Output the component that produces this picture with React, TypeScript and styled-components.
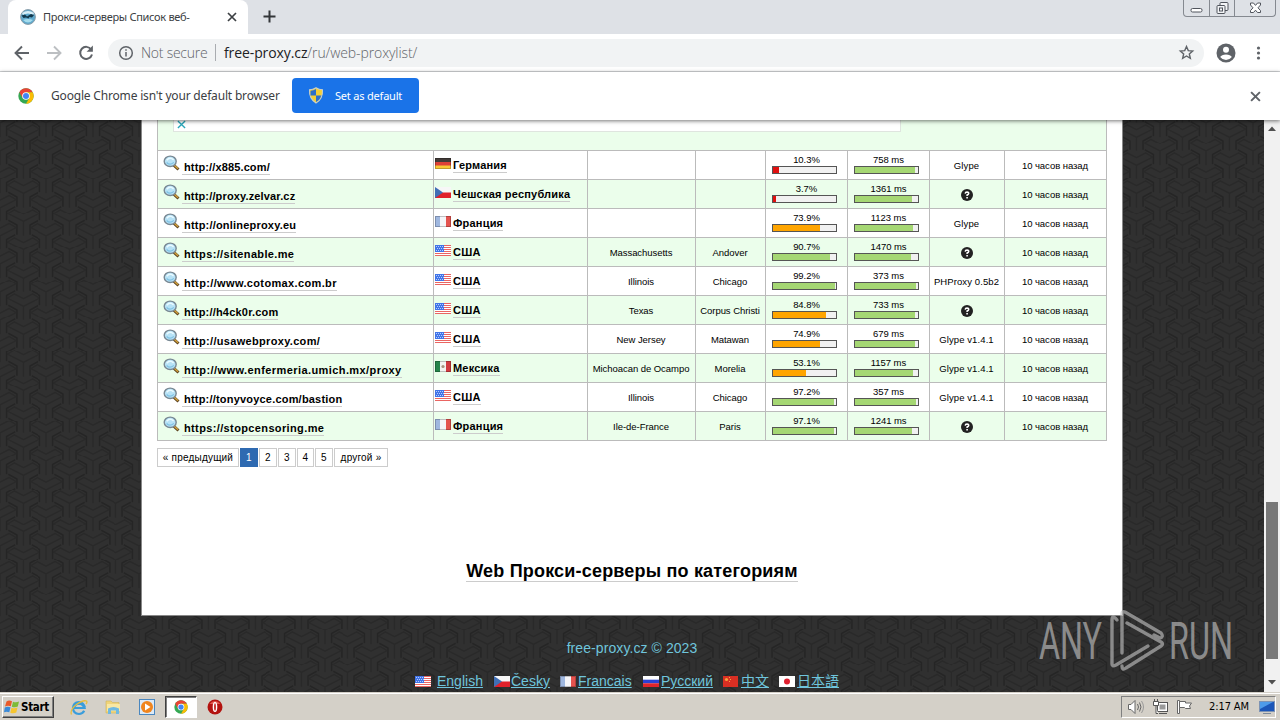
import React from "react";
import styled, { createGlobalStyle } from "styled-components";

const GlobalStyle = createGlobalStyle`
  * {
    box-sizing: border-box;
  }
  body {
    margin: 0;
    overflow: hidden;
    font-family: "Liberation Sans", "Noto Sans CJK SC", sans-serif;
  }
  svg {
    display: block;
    flex: none;
  }
`;

const knot = (x: number, y: number) =>
  `<g transform="translate(${x} ${y})"><path d="M-16 -4L-9 -8L0 -3.5L9 -8L16 -4M-16 -4L0 4L16 -4M0 4V18"/><path d="M-6.5 17V7.5L-15 3M6.5 17V7.5L15 3" stroke="#252525" stroke-width="1.6"/></g>`;

const pattern = encodeURIComponent(
  `<svg xmlns="http://www.w3.org/2000/svg" width="46.4" height="28.2" viewBox="0 0 46.4 28.2"><rect width="47" height="29" fill="#303030"/><g fill="none" stroke="#292929" stroke-width="1.5">${[
    [23.2, -21.2],
    [23.2, 7],
    [23.2, 35.2],
    [0, -7.1],
    [0, 21.1],
    [46.4, -7.1],
    [46.4, 21.1],
  ]
    .map(([x, y]) => knot(x, y))
    .join("")}</g></svg>`
);

const Screen = styled.div`
  position: relative;
  width: 1280px;
  height: 720px;
  display: flex;
  flex-direction: column;
  overflow: hidden;
  background: #fff;
`;

const TabStrip = styled.div`
  height: 34px;
  flex: none;
  display: flex;
  align-items: flex-start;
  padding-left: 8px;
  background: #dee1e6;
`;

const Tab = styled.div`
  width: 240px;
  height: 34px;
  display: flex;
  align-items: center;
  padding: 0 11px 0 12px;
  background: #fff;
  border-radius: 8px 8px 0 0;
`;

const TabTitle = styled.div`
  flex: 1;
  margin-left: 7px;
  font: 11px/16px "Noto Sans", sans-serif;
  letter-spacing: -0.3px;
  color: #3c4043;
  white-space: nowrap;
`;

const NewTab = styled.div`
  margin: 10px 0 0 15px;
  flex: 1;
`;

const WindowButtons = styled.div`
  width: 93px;
  height: 17px;
  margin-right: 4px;
  display: grid;
  grid-template-columns: 25px 25px 1fr;
  border: 1px solid #858990;
  border-top: 0;
  border-radius: 0 0 4px 4px;
`;

const WindowButton = styled.div`
  display: flex;
  align-items: center;
  justify-content: center;
  & + & {
    border-left: 1px solid #858990;
  }
`;

const Toolbar = styled.div`
  height: 38px;
  flex: none;
  display: flex;
  align-items: center;
  padding: 0 12px 0 13px;
  border-bottom: 1px solid #d5d7da;
  color: #5f6368;
`;

const NavButtons = styled.div`
  display: flex;
  gap: 14px;
  width: 95px;
`;

const AddressBar = styled.div`
  width: 1096px;
  height: 28px;
  display: flex;
  align-items: center;
  padding: 0 9px;
  border-radius: 14px;
  background: #f1f3f4;
  font: 300 14px/20px "Open Sans", "Noto Sans", sans-serif;
  color: #5f6368;
`;

const NotSecure = styled.span`
  width: 75px;
  margin-left: 7px;
  border-right: 1px solid #a9acb0;
  line-height: 17px;
  letter-spacing: -0.25px;
  white-space: nowrap;
`;

const Url = styled.span`
  flex: 1;
  margin-left: 8px;
  letter-spacing: -0.1px;
  b {
    font-weight: 400;
    color: #202124;
  }
`;

const ToolbarEnd = styled.div`
  display: flex;
  align-items: center;
  gap: 12px;
  margin-left: 12px;
`;

const InfoBar = styled.div`
  position: relative;
  z-index: 1;
  height: 48px;
  flex: none;
  display: flex;
  align-items: center;
  padding: 0 19px 0 18px;
  background: #fff;
  box-shadow: 0 1px 4px rgba(0, 0, 0, 0.55);
`;

const InfoText = styled.span`
  width: 258px;
  padding-left: 17px;
  font: 12px/18px "Noto Sans", sans-serif;
  letter-spacing: -0.18px;
  color: #3c4043;
  white-space: nowrap;
`;

const DefaultButton = styled.div`
  width: 127px;
  height: 35px;
  margin: 0 auto 1px 0;
  display: flex;
  align-items: center;
  gap: 11px;
  padding-left: 16px;
  border-radius: 4px;
  background: #1a73e8;
  color: #fff;
  font: 11px/16px "Noto Sans", sans-serif;
  letter-spacing: -0.2px;
`;

const Viewport = styled.div`
  flex: 1;
  min-height: 0;
  display: flex;
`;

const Page = styled.div`
  flex: 1;
  display: flex;
  flex-direction: column;
  align-items: center;
  background: #2e2e2e url("data:image/svg+xml,${pattern}") 0 6px;
`;

const Sheet = styled.div`
  width: 982px;
  height: 496px;
  padding: 0 15px;
  background: #fff;
  border: 1px solid #888;
  border-top: 0;
`;

const Table = styled.div`
  border: 1px solid #bbb;
  border-top: 0;
`;

const AdRow = styled.div`
  height: 30px;
  padding-left: 15px;
  background: #ebfeeb;
`;

const AdSlot = styled.div`
  width: 728px;
  height: 12px;
  padding: 0 3px;
  background: #fff;
  border: 1px solid #dfe5df;
  border-top: 0;
`;

const Row = styled.div<{ $even: boolean }>`
  height: 29px;
  display: grid;
  grid-template-columns: 275px 154px 108px 70px 82px 82px 75px 1fr;
  border-top: 1px solid #bbb;
  background: ${(p) => (p.$even ? "#ebfeeb" : "#fff")};
`;

const Cell = styled.div<{ $spacing?: number }>`
  display: flex;
  align-items: center;
  justify-content: center;
  padding: 1px 1px 0 0;
  font-size: 9.5px;
  letter-spacing: ${(p) => p.$spacing ?? -0.05}px;
  color: #000;
  white-space: nowrap;
  & + & {
    border-left: 1px solid #bbb;
  }
`;

const LinkCell = styled(Cell)`
  justify-content: flex-start;
  align-items: flex-start;
  padding: 4px 0 0 5px;
`;

const CountryCell = styled(LinkCell)`
  padding: 7px 0 0 1px;
  && {
    border-left: 1px solid #bbb;
  }
`;

const SiteLink = styled.span<{ $spacing?: number }>`
  margin: 5px 0 0 2px;
  padding-left: 2px;
  border-bottom: 1px solid #ccc;
  font-size: 11px;
  font-weight: bold;
  line-height: 14px;
  letter-spacing: ${(p) => p.$spacing ?? 0.2}px;
`;

const CountryLink = styled(SiteLink)`
  margin: 0 0 0 2px;
  padding: 0;
`;

const MeterCell = styled(Cell)`
  flex-direction: column;
  justify-content: flex-start;
  padding: 3px 0 0;
  line-height: 12px;
`;

const Meter = styled.div`
  width: 65px;
  height: 8px;
  margin-right: 4px;
  border: 1px solid #555;
  background: #f1f1f1;
`;

const MeterFill = styled.div<{ $color: string }>`
  height: 100%;
  background: ${(p) => p.$color};
`;

const Pager = styled.div`
  display: flex;
  gap: 1px;
  margin-top: 7px;
`;

const PageLink = styled.span<{ $width: number; $active?: boolean }>`
  width: ${(p) => p.$width}px;
  height: 19px;
  border: 1px solid ${(p) => (p.$active ? "#2e6ab1" : "#ccc")};
  background: ${(p) => (p.$active ? "#2e6ab1" : "#fff")};
  color: ${(p) => (p.$active ? "#fff" : "#000")};
  font-size: 10px;
  line-height: 18px;
  letter-spacing: 0.2px;
  text-align: center;
  white-space: nowrap;
`;

const Heading = styled.h2`
  width: max-content;
  margin: 92px auto 0;
  padding-top: 2px;
  border-bottom: 1px solid #ccc;
  font-size: 18px;
  line-height: 20px;
  letter-spacing: 0.19px;
  color: #000;
`;

const Copyright = styled.div`
  margin-top: 23px;
  font-size: 14px;
  line-height: 18px;
  letter-spacing: 0.08px;
  color: #6fc5dc;
`;

const Languages = styled.div`
  width: 434px;
  display: flex;
  align-items: center;
  margin-top: 14px;
`;

const Language = styled.div<{ $width: number; $gap?: number }>`
  width: ${(p) => p.$width}px;
  display: flex;
  align-items: center;
  gap: ${(p) => p.$gap ?? 1}px;
  font-size: 14px;
  line-height: 20px;
  color: #6fc5dc;
  text-decoration: underline;
  white-space: nowrap;
`;

const Scrollbar = styled.div`
  width: 16px;
  display: flex;
  flex-direction: column;
  align-items: center;
  justify-content: space-between;
  padding: 6px 0 7px;
  background: #f1f1f1;
`;

const Thumb = styled.div`
  width: 12px;
  height: 157px;
  margin: 371px 0 auto;
  background: #787878;
`;

const Taskbar = styled.div`
  height: 28px;
  flex: none;
  display: flex;
  align-items: flex-start;
  padding: 2px 4px 0 2px;
  border-top: 1px solid #d4d0c8;
  box-shadow: inset 0 1px #fff;
  background: #d4d0c8;
`;

const StartButton = styled.div`
  width: 52px;
  height: 22px;
  margin-top: 1px;
  display: flex;
  align-items: center;
  gap: 1px;
  padding-left: 1px;
  border: 1px solid;
  border-color: #fff #404040 #404040 #fff;
  box-shadow: inset -1px -1px #808080;
  font: bold 11.5px/16px "DejaVu Sans Condensed", "DejaVu Sans", sans-serif;
  letter-spacing: -0.3px;
  color: #000;
`;

const TaskIcons = styled.div`
  display: flex;
  align-items: center;
  height: 24px;
  margin-left: 8px;
  flex: 1;
`;

const TaskButton = styled.div<{ $active?: boolean }>`
  width: 34px;
  height: 22px;
  display: flex;
  align-items: center;
  justify-content: center;
  ${(p) =>
    p.$active &&
    `
    width: 32px;
    margin: 0 1px;
    border: 1px solid;
    border-color: #404040 #fff #fff #404040;
    box-shadow: inset 1px 1px #808080;
    background: #fff;
  `}
`;

const Tray = styled.div`
  width: 155px;
  height: 22px;
  margin-top: 1px;
  display: flex;
  align-items: center;
  gap: 7px;
  padding-left: 5px;
  border: 1px solid;
  border-color: #808080 #fff #fff #808080;
`;

const Clock = styled.span`
  width: 43px;
  margin: 0 2px 0 9px;
  font: 11px/16px "DejaVu Sans Condensed", "DejaVu Sans", sans-serif;
  letter-spacing: -0.1px;
  white-space: nowrap;
`;

const Watermark = styled.svg`
  position: absolute;
  left: 1030px;
  top: 605px;
  z-index: 2;
  opacity: 0.62;
`;

type FlagCode = "de" | "cz" | "fr" | "us" | "mx" | "ru" | "cn" | "jp";

const Flag = ({ code }: { code: FlagCode }) => (
  <svg width="16" height="11" viewBox="0 0 16 11">
    {code === "de" && (
      <>
        <rect width="16" height="11" fill="#f9c835" />
        <rect width="16" height="7.5" fill="#dd4037" />
        <rect width="16" height="4" fill="#423b38" />
      </>
    )}
    {code === "cz" && (
      <>
        <rect width="16" height="11" fill="#f7f7f7" />
        <rect y="5.5" width="16" height="5.5" fill="#e0212b" />
        <path d="M0 0L8 5.5L0 11Z" fill="#416fb5" />
      </>
    )}
    {code === "fr" && (
      <>
        <rect width="16" height="11" fill="#f5f5f8" />
        <rect width="5" height="11" fill="#9fb7df" />
        <rect x="11" width="5" height="11" fill="#e4534f" />
      </>
    )}
    {code === "us" && (
      <>
        <rect width="16" height="11" fill="#fff" />
        <path
          d="M0 .5H16M0 2.5H16M0 4.5H16M0 6.5H16M0 8.5H16M0 10.5H16"
          stroke="#ea6562"
        />
        <rect width="9" height="7" fill="#4174e8" />
        <path
          d="M1 1.5H9M2 3.5H9M1 5.5H9"
          stroke="#b4ccff"
          strokeDasharray="1 1"
        />
      </>
    )}
    {code === "mx" && (
      <>
        <rect width="16" height="11" fill="#f3f3f0" />
        <rect width="5" height="11" fill="#26834b" />
        <rect x="11" width="5" height="11" fill="#d13a40" />
        <circle cx="8" cy="5.5" r="1.6" fill="#a7917c" />
      </>
    )}
    {code === "ru" && (
      <>
        <rect width="16" height="11" fill="#fff" />
        <rect y="3.7" width="16" height="3.7" fill="#2a41d4" />
        <rect y="7.3" width="16" height="3.7" fill="#e0252c" />
      </>
    )}
    {code === "cn" && (
      <>
        <rect width="15" height="11" fill="#d92f23" />
        <circle cx="3.5" cy="3.5" r="1.6" fill="#f6a23c" />
        <path d="M6 1.5h1M7 3.5h1M6 5.5h1" stroke="#f6a23c" />
      </>
    )}
    {code === "jp" && (
      <>
        <rect width="16" height="11" fill="#fff" />
        <circle cx="8" cy="5.5" r="3" fill="#e02030" />
      </>
    )}
    {(code === "de" || code === "fr" || code === "mx") && (
      <rect
        x=".5"
        y=".5"
        width="15"
        height="10"
        fill="none"
        stroke="#000"
        opacity=".22"
      />
    )}
  </svg>
);

const Magnifier = () => (
  <svg width="17" height="17" viewBox="0 0 17 17">
    <path d="M10.5 10L15.5 14.5" stroke="#5b4321" strokeWidth="3" />
    <path d="M11 10L15 13.7" stroke="#d3a13c" strokeWidth="1.5" />
    <ellipse cx="7.2" cy="6.3" rx="6" ry="5.2" fill="#b7e2f6" stroke="#788792" strokeWidth="1.4" />
    <path d="M3.7 5.2Q7 1.5 10.6 5" fill="none" stroke="#eafaff" strokeWidth="1.5" />
    <path d="M3.6 7.5Q7 11 10.8 7.4" fill="none" stroke="#7fc2e4" strokeWidth="1.2" />
  </svg>
);

const Cross = ({ size, color, width = 2 }: { size: number; color: string; width?: number }) => (
  <svg width={size} height={size} viewBox="0 0 10 10">
    <path d="M1 1L9 9M9 1L1 9" stroke={color} strokeWidth={width} />
  </svg>
);

const ChromeLogo = ({ size }: { size: number }) => (
  <svg width={size} height={size} viewBox="0 0 48 48">
    <circle cx="24" cy="24" r="23" fill="#34a853" />
    <path d="M4.1 12.5A23 23 0 0 1 43.9 12.5H24L14 29.8Z" fill="#ea4335" />
    <path d="M43.9 12.5A23 23 0 0 1 24 47L34 29.8L24 12.5Z" fill="#fbbc05" />
    <circle cx="24" cy="24" r="11.5" fill="#fff" />
    <circle cx="24" cy="24" r="9" fill="#4285f4" />
  </svg>
);

const Globe = () => (
  <svg width="16" height="16" viewBox="0 0 16 16">
    <circle cx="8" cy="8" r="7.4" fill="#5fa9cd" stroke="#8b9da8" strokeWidth="1" />
    <path d="M2 4Q8 0 14 4L13 6Q8 3 3 6Z" fill="#d7eef7" />
    <path d="M1.5 6.5L5 5.5L7 7.5L11 5L14 6L12 8.5L9.5 8L8.5 9.5L6 8.5L3.5 9Z" fill="#12384c" />
    <path d="M3 11Q8 9 13 11Q8 16 3 11Z" fill="#a5dced" />
  </svg>
);

const Shield = () => (
  <svg width="16" height="17" viewBox="0 0 16 17">
    <path d="M8 .8Q11 2.8 14.5 2.8Q15 12 8 16Q1 12 1.5 2.8Q5 2.8 8 .8Z" fill="#f5cf35" stroke="#c9d0c8" strokeWidth="1.1" />
    <path d="M8 2Q5.5 3.6 2.5 3.8V8.5H8Z" fill="#2d6fca" />
    <path d="M8 8.5H13.3Q12 13 8 15Z" fill="#2d6fca" />
  </svg>
);

const QuestionMark = () => (
  <svg width="12" height="12" viewBox="0 0 12 12">
    <circle cx="6" cy="6" r="6" fill="#222" />
    <path d="M4.2 4.6Q4.3 3 6 3Q7.8 3.1 7.7 4.5Q7.5 5.4 6.1 6V7" fill="none" stroke="#fff" strokeWidth="1.5" />
    <path d="M5.3 8H6.9V9.5H5.3Z" fill="#fff" />
  </svg>
);

type Proxy = {
  url: string;
  spacing?: number;
  flag: FlagCode;
  country: string;
  region?: string;
  city?: string;
  uptime: number;
  ms: number;
  speed: number;
  software?: string;
};

const proxies: Proxy[] = [
  { url: "http://x885.com/", spacing: 0.13, flag: "de", country: "Германия", uptime: 10.3, ms: 758, speed: 95, software: "Glype" },
  { url: "http://proxy.zelvar.cz", spacing: 0.15, flag: "cz", country: "Чешская республика", uptime: 3.7, ms: 1361, speed: 90 },
  { url: "http://onlineproxy.eu", flag: "fr", country: "Франция", uptime: 73.9, ms: 1123, speed: 92, software: "Glype" },
  { url: "https://sitenable.me", spacing: 0.35, flag: "us", country: "США", region: "Massachusetts", city: "Andover", uptime: 90.7, ms: 1470, speed: 89 },
  { url: "http://www.cotomax.com.br", spacing: 0.36, flag: "us", country: "США", region: "Illinois", city: "Chicago", uptime: 99.2, ms: 373, speed: 97, software: "PHProxy 0.5b2" },
  { url: "http://h4ck0r.com", flag: "us", country: "США", region: "Texas", city: "Corpus Christi", uptime: 84.8, ms: 733, speed: 95 },
  { url: "http://usawebproxy.com/", spacing: 0.32, flag: "us", country: "США", region: "New Jersey", city: "Matawan", uptime: 74.9, ms: 679, speed: 95, software: "Glype v1.4.1" },
  { url: "http://www.enfermeria.umich.mx/proxy", spacing: 0.42, flag: "mx", country: "Мексика", region: "Michoacan de Ocampo", city: "Morelia", uptime: 53.1, ms: 1157, speed: 92, software: "Glype v1.4.1" },
  { url: "http://tonyvoyce.com/bastion", flag: "us", country: "США", region: "Illinois", city: "Chicago", uptime: 97.2, ms: 357, speed: 97, software: "Glype v1.4.1" },
  { url: "https://stopcensoring.me", spacing: 0.37, flag: "fr", country: "Франция", region: "Ile-de-France", city: "Paris", uptime: 97.1, ms: 1241, speed: 91 },
];

const meterColor = (value: number) =>
  value < 33 ? "#e0100f" : value < 90 ? "#ffa500" : "#a5d773";

const ProxyRow = ({ proxy, even }: { proxy: Proxy; even: boolean }) => (
  <Row $even={even}>
    <LinkCell>
      <Magnifier />
      <SiteLink $spacing={proxy.spacing}>{proxy.url}</SiteLink>
    </LinkCell>
    <CountryCell>
      <Flag code={proxy.flag} />
      <CountryLink>{proxy.country}</CountryLink>
    </CountryCell>
    <Cell>{proxy.region}</Cell>
    <Cell>{proxy.city}</Cell>
    <MeterCell>
      {proxy.uptime}%
      <Meter>
        <MeterFill
          $color={meterColor(proxy.uptime)}
          style={{ width: `${Math.max(proxy.uptime, 5)}%` }}
        />
      </Meter>
    </MeterCell>
    <MeterCell>
      {proxy.ms} ms
      <Meter>
        <MeterFill $color="#a5d773" style={{ width: `${proxy.speed}%` }} />
      </Meter>
    </MeterCell>
    <Cell $spacing={0.1}>{proxy.software || <QuestionMark />}</Cell>
    <Cell $spacing={-0.05}>10 часов назад</Cell>
  </Row>
);

const BrowserChrome = () => (
  <>
    <TabStrip>
      <Tab>
        <Globe />
        <TabTitle>Прокси-серверы Список веб-</TabTitle>
        <Cross size={10} color="#3c4043" width={1.7} />
      </Tab>
      <NewTab>
        <svg width="13" height="13" viewBox="0 0 13 13">
          <path d="M6.5 .5V12.5M.5 6.5H12.5" stroke="#333639" strokeWidth="2" />
        </svg>
      </NewTab>
      <WindowButtons>
        <WindowButton>
          <svg width="13" height="16" viewBox="0 0 13 16">
            <rect x="1" y="8.5" width="11" height="3.5" rx="1.5" fill="#fff" stroke="#50545c" />
          </svg>
        </WindowButton>
        <WindowButton>
          <svg width="13" height="14" viewBox="0 0 13 14" fill="#f3f4f6" stroke="#50545c">
            <rect x="4" y="1.5" width="8" height="8" rx="1" />
            <rect x="1" y="4.5" width="8" height="8" rx="1" />
            <rect x="3.5" y="7" width="3" height="3" />
          </svg>
        </WindowButton>
        <WindowButton>
          <svg width="13" height="12" viewBox="0 0 13 12">
            <path d="M1.5 1H4.5L6.5 3.4L8.5 1H11.5V3L9 5.8L11.5 8.6V10.5H8.5L6.5 8.2L4.5 10.5H1.5V8.6L4 5.8L1.5 3Z" fill="#fff" stroke="#50545c" />
          </svg>
        </WindowButton>
      </WindowButtons>
    </TabStrip>
    <Toolbar>
      <NavButtons>
        <svg width="18" height="18" viewBox="0 0 18 18" fill="none" stroke="#5f6368" strokeWidth="1.9">
          <path d="M16 9H3M9 2.5L2.5 9L9 15.5" />
        </svg>
        <svg width="18" height="18" viewBox="0 0 18 18" fill="none" stroke="#bcbfc2" strokeWidth="1.9">
          <path d="M2 9H15M9 2.5L15.5 9L9 15.5" />
        </svg>
        <svg width="18" height="18" viewBox="0 0 18 18" fill="none" stroke="#5f6368" strokeWidth="2">
          <path d="M14.2 5.5A6 6 0 1 0 15 10.5" />
          <path d="M15.9 1.5V7.8H9.6Z" fill="#5f6368" stroke="none" />
        </svg>
      </NavButtons>
      <AddressBar>
        <svg width="17" height="16" viewBox="0 0 17 16" fill="none" stroke="#5f6368" strokeWidth="1.5">
          <circle cx="9" cy="8" r="6.3" />
          <path d="M9 7V11.5M9 4.3V5.8" />
        </svg>
        <NotSecure>Not secure</NotSecure>
        <Url>
          <b>free-proxy.cz</b>/ru/web-proxylist/
        </Url>
        <svg width="17" height="17" viewBox="0 0 24 24" fill="none" stroke="#5f6368" strokeWidth="2">
          <path d="M12 3.5L14.5 9.3L20.7 9.9L16 14L17.4 20.2L12 16.9L6.6 20.2L8 14L3.3 9.9L9.5 9.3Z" />
        </svg>
      </AddressBar>
      <ToolbarEnd>
        <svg width="20" height="20" viewBox="0 0 20 20">
          <circle cx="10" cy="10" r="9.5" fill="#5f6368" />
          <circle cx="10" cy="6.7" r="3" fill="#fff" />
          <path d="M4.2 14Q5.5 11.7 10 11.6Q14.5 11.7 15.8 14Q13.6 17 10 17Q6.4 17 4.2 14Z" fill="#fff" />
        </svg>
        <svg width="20" height="16" viewBox="0 0 20 16" fill="#5f6368">
          <circle cx="10.5" cy="3" r="1.6" />
          <circle cx="10.5" cy="8" r="1.6" />
          <circle cx="10.5" cy="13" r="1.6" />
        </svg>
      </ToolbarEnd>
    </Toolbar>
    <InfoBar>
      <ChromeLogo size={16} />
      <InfoText>Google Chrome isn't your default browser</InfoText>
      <DefaultButton>
        <Shield />
        Set as default
      </DefaultButton>
      <Cross size={11} color="#5f6368" width={1.8} />
    </InfoBar>
  </>
);

const ProxyPage = () => (
  <Page>
    <Sheet>
      <Table>
        <AdRow>
          <AdSlot>
            <Cross size={9} color="#28a5b8" width={1.5} />
          </AdSlot>
        </AdRow>
        {proxies.map((proxy, i) => (
          <ProxyRow key={proxy.url} proxy={proxy} even={i % 2 === 1} />
        ))}
      </Table>
      <Pager>
        <PageLink $width={82}>« предыдущий</PageLink>
        <PageLink $width={18} $active>
          1
        </PageLink>
        {[2, 3, 4, 5].map((n) => (
          <PageLink key={n} $width={n === 4 ? 17 : 18}>
            {n}
          </PageLink>
        ))}
        <PageLink $width={54}>другой »</PageLink>
      </Pager>
      <Heading>Web Прокси-серверы по категориям</Heading>
    </Sheet>
    <Copyright>free-proxy.cz © 2023</Copyright>
    <Languages>
      <Language $width={79} $gap={6}>
        <Flag code="us" />
        English
      </Language>
      <Language $width={66}>
        <Flag code="cz" />
        Česky
      </Language>
      <Language $width={83} $gap={2}>
        <Flag code="fr" />
        Francais
      </Language>
      <Language $width={80} $gap={2}>
        <Flag code="ru" />
        Русский
      </Language>
      <Language $width={56} $gap={2}>
        <Flag code="cn" />
        中文
      </Language>
      <Language $width={62} $gap={2}>
        <Flag code="jp" />
        日本語
      </Language>
    </Languages>
  </Page>
);

const WindowsTaskbar = () => (
  <Taskbar>
    <StartButton>
      <svg width="16" height="16" viewBox="0 0 16 16">
        <path d="M2.5 2.5Q5 .8 8 2.3L6.8 7.3Q4 6 1 7.5Z" fill="#ea5a2a" />
        <path d="M9 2.7Q12 4 15 2.5L13.8 7.5Q11 9 7.8 7.7Z" fill="#7dbb36" />
        <path d="M.8 8.5Q3.5 7 6.5 8.3L5.3 13.3Q2.5 12 0 13.3Z" fill="#3a8ad8" />
        <path d="M7.5 8.7Q10.5 10 13.5 8.5L12.3 13.5Q9.5 15 6.3 13.7Z" fill="#f6c52f" />
      </svg>
      Start
    </StartButton>
    <TaskIcons>
      <TaskButton>
        <svg width="18" height="17" viewBox="0 0 18 17" fill="none">
          <path d="M14.5 9H4.5Q4.6 5 9 4.6Q13 4.8 14.5 9ZM14.2 11.8Q12.5 15 9 15Q3.2 14.7 3 9Q3.2 3.4 9 3Q13.5 3.2 15 8.5" stroke="#3a9ddb" strokeWidth="2.2" />
          <path d="M1.5 15.5Q-.5 11 6.5 5.5Q13 .8 16.5 2Q17.6 3 16 5" stroke="#e8bd3c" strokeWidth="1.3" />
        </svg>
      </TaskButton>
      <TaskButton>
        <svg width="16" height="16" viewBox="0 0 16 16">
          <path d="M1 2H6L7.5 3.5H14V14H1Z" fill="#f0d47a" stroke="#cfb25a" strokeWidth=".6" />
          <path d="M2 5H15V12H2Z" fill="#f8e7a4" />
          <path d="M3 15V9.5Q8.5 6.5 14 9.5V15H11V11.5H6V15Z" fill="#6fb9e2" />
        </svg>
      </TaskButton>
      <TaskButton>
        <svg width="16" height="16" viewBox="0 0 16 16">
          <rect x=".5" y=".5" width="15" height="15" fill="#dceaf7" stroke="#4a87bf" />
          <circle cx="8" cy="8" r="6" fill="#f0851e" />
          <path d="M6 4.5L11.5 8L6 11.5Z" fill="#fff" />
        </svg>
      </TaskButton>
      <TaskButton $active>
        <ChromeLogo size={14} />
      </TaskButton>
      <TaskButton>
        <svg width="16" height="16" viewBox="0 0 16 16">
          <circle cx="8" cy="8" r="7.5" fill="#b3120f" />
          <path d="M2.5 5Q8 -1 13.5 5Z" fill="#e45a50" />
          <ellipse cx="8" cy="8" rx="2.3" ry="5" fill="#fff" />
          <ellipse cx="8" cy="8" rx=".9" ry="3.8" fill="#c4211c" />
        </svg>
      </TaskButton>
    </TaskIcons>
    <Tray>
      <svg width="18" height="16" viewBox="0 0 18 16" stroke="#666" fill="#fff">
        <path d="M1.5 5.5H4L8 1.5V14.5L4 10.5H1.5Z" />
        <path d="M10.5 5Q12.5 8 10.5 11M12.5 3.5Q15.5 8 12.5 12.5" fill="none" />
        <path d="M14.5 2Q18.5 8 14.5 14" fill="none" stroke="#999" />
      </svg>
      <svg width="17" height="16" viewBox="0 0 17 16" stroke="#555" fill="#fff">
        <rect x="5.5" y="3.5" width="10" height="9" />
        <rect x="7.5" y="5.5" width="6" height="5" fill="#999" stroke="none" />
        <path d="M7 14.5H15" />
        <path d="M1.5 2.5H6.5V6.5H1.5ZM4 7V14.5H6M2.5 2V0M5.5 2V0" />
      </svg>
      <svg width="17" height="16" viewBox="0 0 17 16" stroke="#666" fill="#fff">
        <path d="M1.5 1.5H3.5V14.5H1.5Z" />
        <path d="M3.5 2.5H9.5V4H15.5L13.5 7L14.5 9.5H9.5L8.5 8.5H3.5Z" />
      </svg>
      <Clock>2:17 AM</Clock>
      <svg width="16" height="15" viewBox="0 0 16 15">
        <rect x=".5" y="1.5" width="15" height="10" fill="#1c56b8" stroke="#7d93b4" />
        <path d="M1 2H14L1 9Z" fill="#4e9bea" />
        <path d="M4 13H12V14H4Z" fill="#7d8a9a" />
      </svg>
    </Tray>
  </Taskbar>
);

const App = () => (
  <>
    <GlobalStyle />
    <Screen>
      <BrowserChrome />
      <Viewport>
        <ProxyPage />
        <Scrollbar>
          <svg width="8" height="5" viewBox="0 0 8 5">
            <path d="M0 5L4 .5L8 5Z" fill="#505050" />
          </svg>
          <Thumb />
          <svg width="8" height="5" viewBox="0 0 8 5">
            <path d="M0 0L4 4.5L8 0Z" fill="#505050" />
          </svg>
        </Scrollbar>
      </Viewport>
      <WindowsTaskbar />
      <Watermark
        width="245"
        height="72"
        viewBox="0 0 245 72"
        fill="#c4c4c4"
        fontFamily="Roboto, sans-serif"
        fontSize="51"
      >
        <text x="9" y="54" textLength="63" lengthAdjust="spacingAndGlyphs">
          ANY
        </text>
        <text x="139" y="54" textLength="64" lengthAdjust="spacingAndGlyphs">
          RUN
        </text>
        <g fill="none" stroke="#c4c4c4" strokeWidth="3.4" strokeLinejoin="round" strokeLinecap="round">
          <path d="M92 48V9Q92 6 95 7L131 28Q134 32 130 33L124 30" />
          <path d="M87 15Q82 9 82 15V59Q82 62 86 60L118 41" />
          <path d="M97 18L131 37Q134 39 131 41L96 63Q92 66 92 61" />
        </g>
      </Watermark>
    </Screen>
  </>
);

export default App;
